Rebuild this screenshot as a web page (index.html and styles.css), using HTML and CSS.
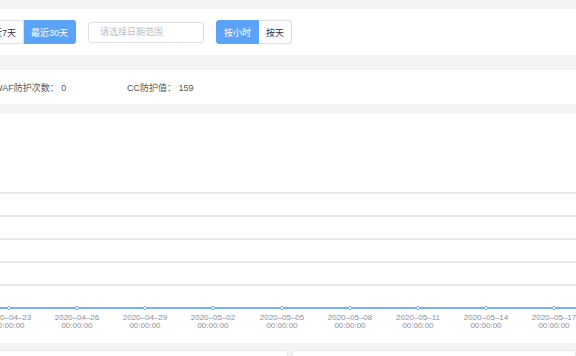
FILE: index.html
```html
<!DOCTYPE html>
<html lang="zh-CN">
<head>
    <meta charset="UTF-8">
    <meta name="viewport" content="width=device-width, initial-scale=1.0">
    <title>防护统计</title>
    <link rel="stylesheet" href="styles.css">
</head>
<body>
    <div class="page">
        <div class="panel toolbar">
            <div class="btn-group">
                <button class="btn">最近7天</button>
                <button class="btn active">最近30天</button>
            </div>
            <input class="date-range" type="text" placeholder="请选择日期范围">
            <div class="btn-group">
                <button class="btn active">按小时</button>
                <button class="btn">按天</button>
            </div>
        </div>

        <div class="panel stats">
            <span class="stat">WAF防护次数： 0</span>
            <span class="stat">CC防护值： 159</span>
        </div>

        <div class="panel chart">
            <svg width="600" height="229" viewBox="0 0 600 229">
                <g stroke="#e9e9e9" stroke-width="2">
                    <line x1="0" y1="79" x2="600" y2="79"/>
                    <line x1="0" y1="102" x2="600" y2="102"/>
                    <line x1="0" y1="125" x2="600" y2="125"/>
                    <line x1="0" y1="148" x2="600" y2="148"/>
                    <line x1="0" y1="171" x2="600" y2="171"/>
                </g>
                <line x1="0" y1="194" x2="600" y2="194" stroke="#7aaef5" stroke-width="2"/>
                <g fill="#fff" stroke="#7aaef5" stroke-width="1">
                    <circle cx="33" cy="194" r="1.6"/>
                    <circle cx="101" cy="194" r="1.6"/>
                    <circle cx="169" cy="194" r="1.6"/>
                    <circle cx="237" cy="194" r="1.6"/>
                    <circle cx="306" cy="194" r="1.6"/>
                    <circle cx="374" cy="194" r="1.6"/>
                    <circle cx="442" cy="194" r="1.6"/>
                    <circle cx="510" cy="194" r="1.6"/>
                    <circle cx="578" cy="194" r="1.6"/>
                </g>
                <g class="axis-label" text-anchor="middle">
                    <text x="33" y="206">2020–04–23</text><text x="33" y="213.5">00:00:00</text>
                    <text x="101" y="206">2020–04–26</text><text x="101" y="213.5">00:00:00</text>
                    <text x="169" y="206">2020–04–29</text><text x="169" y="213.5">00:00:00</text>
                    <text x="237" y="206">2020–05–02</text><text x="237" y="213.5">00:00:00</text>
                    <text x="306" y="206">2020–05–05</text><text x="306" y="213.5">00:00:00</text>
                    <text x="374" y="206">2020–05–08</text><text x="374" y="213.5">00:00:00</text>
                    <text x="442" y="206">2020–05–11</text><text x="442" y="213.5">00:00:00</text>
                    <text x="510" y="206">2020–05–14</text><text x="510" y="213.5">00:00:00</text>
                    <text x="578" y="206">2020–05–17</text><text x="578" y="213.5">00:00:00</text>
                </g>
            </svg>
        </div>

        <div class="cards">
            <div class="card"></div>
            <div class="card"></div>
        </div>
    </div>
</body>
</html>
```

FILE: styles.css
```css
body {
    margin: 0;
    background-color: #f4f4f5;
    font-family: "Liberation Sans", "Noto Sans CJK SC", sans-serif;
    overflow: hidden;
}

.page {
    width: 600px;
    margin-left: -24px;
    padding-top: 9px;
}

.panel {
    background-color: white;
}

.toolbar {
    height: 46px;
    display: flex;
    align-items: center;
    gap: 12px;
}

.btn-group {
    display: flex;
}

.btn {
    height: 24px;
    padding: 0 7px;
    font-family: inherit;
    font-size: 9px;
    color: #333;
    background-color: white;
    border: 1px solid #dcdfe6;
    cursor: pointer;
}

    .btn:first-child {
        border-radius: 3px 0 0 3px;
    }

    .btn:last-child {
        border-radius: 0 3px 3px 0;
        border-left: none;
    }

    .btn.active {
        color: white;
        background-color: #5aa3f7;
        border-color: #5aa3f7;
    }

.date-range {
    box-sizing: border-box;
    width: 116px;
    height: 21px;
    padding: 0 11px;
    font-family: inherit;
    font-size: 9px;
    border: 1px solid #dcdfe6;
    border-radius: 3px;
}

    .date-range::placeholder {
        color: #b8bcc4;
    }

.stats {
    margin-top: 15px;
    height: 34px;
    display: flex;
    align-items: center;
    padding-left: 18px;
    border-bottom: 1px solid #eeeeee;
    font-size: 9px;
    color: #555;
}

.stat {
    width: 133px;
}

.chart {
    margin-top: 9px;
    height: 229px;
}

    .chart svg {
        display: block;
    }

.axis-label {
    font-family: "Liberation Sans", sans-serif;
    font-size: 8px;
    fill: #8b909a;
}

.cards {
    margin-top: 7px;
    display: grid;
    grid-template-columns: 312px 1fr;
    gap: 4px;
}

.card {
    height: 40px;
    background-color: white;
    border: 1px solid #e8eaee;
    border-radius: 2px;
}
```
